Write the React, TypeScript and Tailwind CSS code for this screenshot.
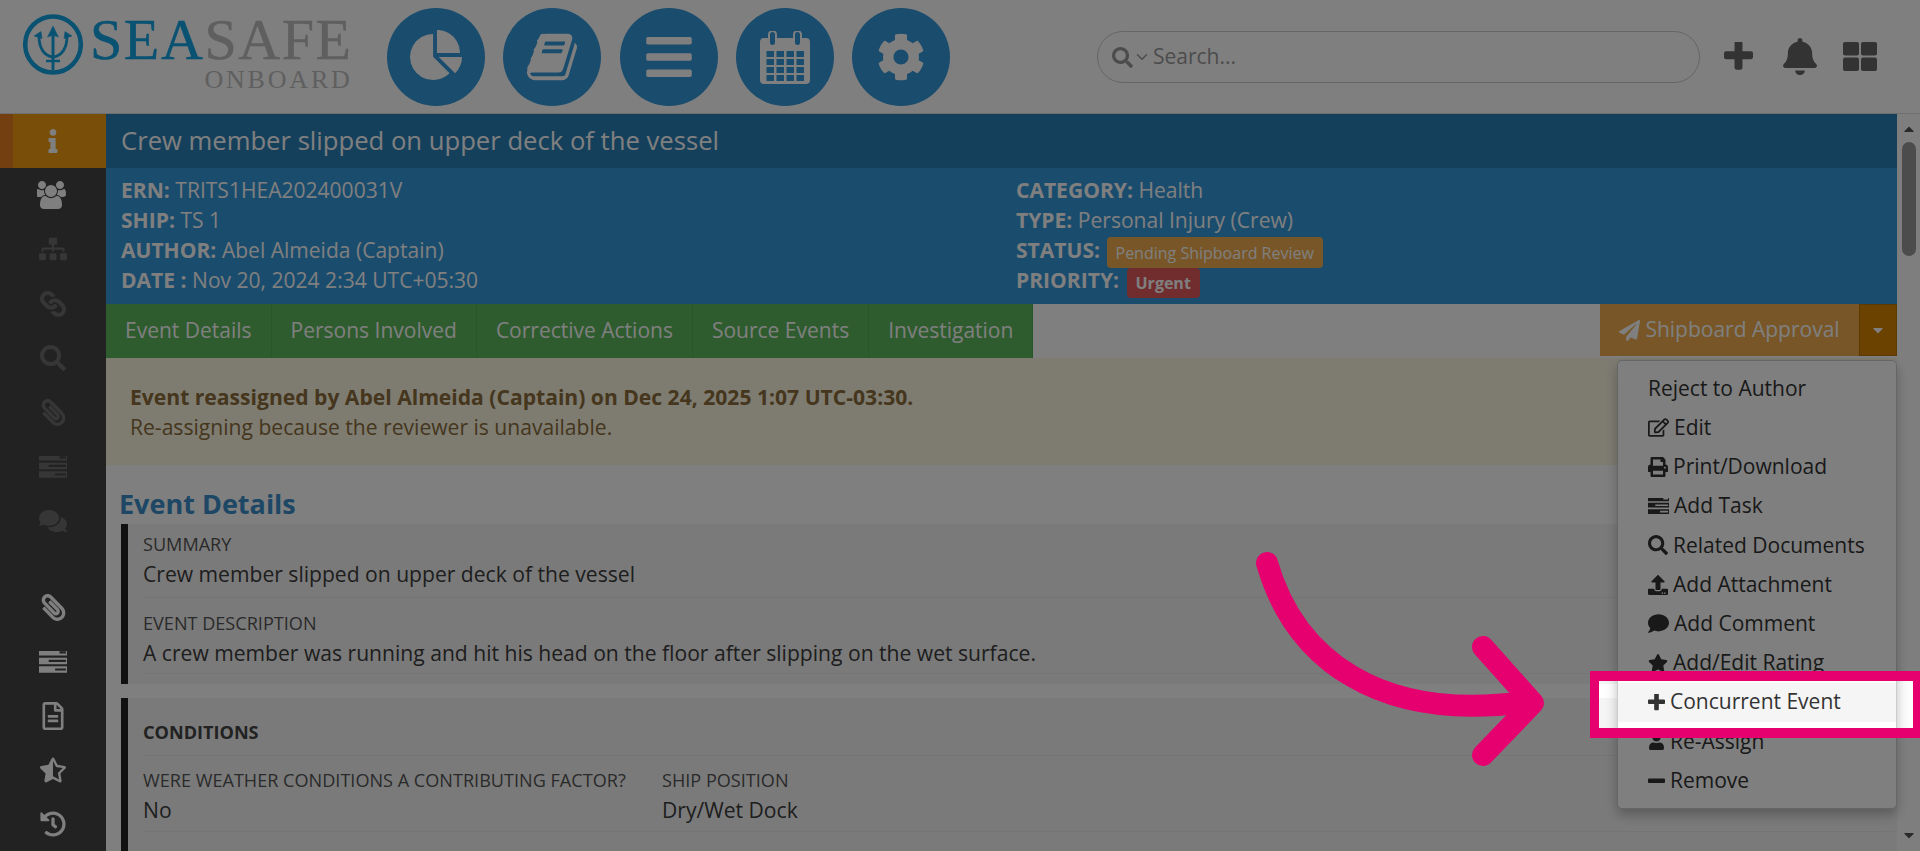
import type { ReactNode } from 'react';
import { ChevronDown } from 'lucide-react';
import {
  FaBars,
  FaBell,
  FaCaretDown,
  FaCog,
  FaComment,
  FaComments,
  FaHistory,
  FaInfo,
  FaLink,
  FaPaperclip,
  FaPaperPlane,
  FaPrint,
  FaRegEdit,
  FaRegFileAlt,
  FaSearch,
  FaSitemap,
  FaStar,
  FaStarHalfAlt,
  FaUpload,
  FaUser,
} from 'react-icons/fa';

type IconProps = { className?: string };

function UsersIcon({ className }: IconProps) {
  return (
    <svg viewBox="0 0 2048 1792" fill="currentColor" className={className}>
      <path d="M529 896q-162 5-265 128h-134q-82 0-138-40.5t-56-118.5q0-353 124-353 6 0 43.5 21t97.5 42.5 119 21.5q67 0 133-23-5 37-5 66 0 139 81 256zm1071 637q0 120-73 189.5t-194 69.5h-874q-121 0-194-69.5t-73-189.5q0-53 3.5-103.5t14-109 26.5-108.5 43-97.5 62-81 85.5-53.5 111.5-20q10 0 43 21.5t73 48 107 48 135 21.5 135-21.5 107-48 73-48 43-21.5q61 0 111.5 20t85.5 53.5 62 81 43 97.5 26.5 108.5 14 109 3.5 103.5zm-1024-1277q0 106-75 181t-181 75-181-75-75-181 75-181 181-75 181 75 75 181zm704 384q0 159-112.5 271.5t-271.5 112.5-271.5-112.5-112.5-271.5 112.5-271.5 271.5-112.5 271.5 112.5 112.5 271.5zm576 225q0 78-56 118.5t-138 40.5h-134q-103-123-265-128 81-117 81-256 0-29-5-66 66 23 133 23 59 0 119-21.5t97.5-42.5 43.5-21q124 0 124 353zm-128-609q0 106-75 181t-181 75-181-75-75-181 75-181 181-75 181 75 75 181z" />
    </svg>
  );
}

function TasksIcon({ className }: IconProps) {
  return (
    <svg viewBox="64 256 1664 1280" fill="currentColor" className={className}>
      <path d="M1024 1408h640v-128h-640v128zm-384-512h1024v-128h-1024v128zm640-512h384v-128h-384v128zm512 832v256q0 26-19 45t-45 19h-1664q-26 0-45-19t-19-45v-256q0-26 19-45t45-19h1664q26 0 45 19t19 45zm0-512v256q0 26-19 45t-45 19h-1664q-26 0-45-19t-19-45v-256q0-26 19-45t45-19h1664q26 0 45 19t19 45zm0-512v256q0 26-19 45t-45 19h-1664q-26 0-45-19t-19-45v-256q0-26 19-45t45-19h1664q26 0 45 19t19 45z" />
    </svg>
  );
}

function PlusIcon({ className }: IconProps) {
  return (
    <svg viewBox="192 192 1408 1408" fill="currentColor" className={className}>
      <path d="M1600 736v192q0 40-28 68t-68 28h-416v416q0 40-28 68t-68 28h-192q-40 0-68-28t-28-68v-416h-416q-40 0-68-28t-28-68v-192q0-40 28-68t68-28h416v-416q0-40 28-68t68-28h192q40 0 68 28t28 68v416h416q40 0 68 28t28 68z" />
    </svg>
  );
}

function MinusIcon({ className }: IconProps) {
  return (
    <svg viewBox="0 0 18 18" fill="currentColor" className={className}>
      <rect x="0" y="7" width="18" height="4.6" rx="1" />
    </svg>
  );
}

function PieIcon({ className }: IconProps) {
  return (
    <svg viewBox="0 0 1728 1792" fill="currentColor" className={className}>
      <path d="M768 890l546 546q-106 108-247.5 168t-298.5 60q-209 0-385.5-103t-279.5-279.5-103-385.5 103-385.5 279.5-279.5 385.5-103v762zm187 2h773q0 157-60 298.5t-168 247.5zm709-128h-768v-768q209 0 385.5 103t279.5 279.5 103 385.5z" />
    </svg>
  );
}

function BookIcon({ className }: IconProps) {
  return (
    <svg viewBox="0 0 1792 1792" fill="currentColor" className={className}>
      <path d="M1703 478q40 57 18 129l-275 906q-19 64-76.5 107.5t-122.5 43.5h-923q-77 0-148.5-53.5t-99.5-131.5q-24-67-2-127 0-4 3-27t4-37q1-8-3-21.5t-3-19.5q2-11 8-21t16.5-23.5 16.5-23.5q23-38 45-91.5t30-91.5q3-10 .5-30t-.5-28q3-11 17-28t17-23q21-36 42-92t25-90q1-9-2.5-32t.5-28q4-13 22-30.5t22-22.5q19-26 42.5-84.5t27.5-96.5q1-8-3-25.5t-2-26.5q2-8 9-18t18-23 17-21q8-12 16.5-30.5t15-35 16-36 19.5-32 26.5-23.5 36-11.5 47.5 5.5l-1 3q38-9 51-9h761q74 0 114 56t18 130l-274 906q-36 119-71.5 153.5t-128.5 34.5h-869q-27 0-38 15-11 16-1 43 24 70 144 70h923q29 0 56-15.5t35-41.5l300-987q7-22 5-57 38 15 59 43zm-1064 2q-4 13 2 22.5t20 9.5h608q13 0 25.5-9.5t16.5-22.5l21-64q4-13-2-22.5t-20-9.5h-608q-13 0-25.5 9.5t-16.5 22.5zm-83 256q-4 13 2 22.5t20 9.5h608q13 0 25.5-9.5t16.5-22.5l21-64q4-13-2-22.5t-20-9.5h-608q-13 0-25.5 9.5t-16.5 22.5z" />
    </svg>
  );
}

const calCols = [6.5, 16.5, 26.5, 36.5];
const calRows = [20, 28, 36, 44];

function CalendarIcon({ className }: IconProps) {
  return (
    <svg viewBox="0 0 50 53" className={className}>
      <rect x="0" y="7" width="50" height="46" rx="4" fill="currentColor" />
      <rect x="9" y="0" width="7" height="15" rx="3.5" fill="#3498db" stroke="currentColor" strokeWidth="2" />
      <rect x="34" y="0" width="7" height="15" rx="3.5" fill="#3498db" stroke="currentColor" strokeWidth="2" />
      {calRows.map((y) =>
        calCols.map((x) => <rect key={`${x}-${y}`} x={x} y={y} width="7.5" height="6" fill="#3498db" />),
      )}
    </svg>
  );
}

function GridIcon({ className }: IconProps) {
  return (
    <svg viewBox="0 0 34 29" fill="currentColor" className={className}>
      <rect x="0" y="0" width="16" height="13.5" rx="2" />
      <rect x="18" y="0" width="16" height="13.5" rx="2" />
      <rect x="0" y="15.5" width="16" height="13.5" rx="2" />
      <rect x="18" y="15.5" width="16" height="13.5" rx="2" />
    </svg>
  );
}

function Logo() {
  return (
    <div className="flex items-start pl-[23px] pt-[14px]">
      <svg viewBox="0 0 60 62" className="h-[62px] w-[60px] text-[#14a4e4]" fill="none" stroke="currentColor">
        <ellipse cx="30" cy="30.5" rx="27.8" ry="28" strokeWidth="4.5" />
        <path d="M30 20v36" strokeWidth="3" />
        <path d="M30 12l-5.500 11q5.500-3 11 0z" fill="currentColor" strokeWidth="0.5" />
        <path d="M16 22c0 12 5 20 14 21 9-1 14-9 14-21" strokeWidth="2.800" />
        <path d="M11 22l7-4.500 1 7zM49 22l-7-4.500-1 7z" fill="currentColor" strokeWidth="0.5" />
        <path d="M23 47h14" strokeWidth="2.500" />
      </svg>
      <div className="ml-[7px] flex flex-col items-end pt-[1px] font-['Liberation_Serif',serif]">
        <div className="text-[58px] leading-[50px] tracking-[1.6px] [-webkit-text-stroke:0.5px]">
          <span className="text-[#14a4e4]">SEA</span>
          <span className="text-[#bebebe]">SAFE</span>
        </div>
        <div className="mt-[3px] text-[26px] leading-[24px] tracking-[2.8px] text-[#bebebe]">ONBOARD</div>
      </div>
    </div>
  );
}

function Header() {
  const circle = 'flex size-[98px] items-center justify-center rounded-full bg-[#3498db] text-white';
  return (
    <header className="flex h-[114px] items-start border-b border-[#ddd] bg-white">
      <div className="w-[387px]">
        <Logo />
      </div>
      <nav className="flex gap-[18.3px] pt-[8px]">
        <div className={circle}>
          <PieIcon className="h-[54px] w-[52px]" />
        </div>
        <div className={circle}>
          <BookIcon className="size-[54px]" />
        </div>
        <div className={circle}>
          <FaBars className="size-[52px]" />
        </div>
        <div className={circle}>
          <CalendarIcon className="h-[53px] w-[50px]" />
        </div>
        <div className={circle}>
          <FaCog className="size-[48px]" />
        </div>
      </nav>
      <div className="ml-[146.800px] mt-[31px] flex h-[52px] w-[603px] items-center rounded-full border border-[#ccc] pl-[14px]">
        <FaSearch className="size-[21px] text-[#999]" />
        <ChevronDown className="size-[18px] text-[#999]" strokeWidth={2} />
        <span className="ml-[2px] text-[21px] text-[#999]">Search...</span>
      </div>
      <div className="mt-[38px] flex items-center text-[#666]">
        <PlusIcon className="ml-[24px] size-[29px]" />
        <FaBell className="ml-[30px] h-[37px] w-[34px]" preserveAspectRatio="none" />
        <GridIcon className="ml-[26px] h-[29px] w-[34px]" />
      </div>
    </header>
  );
}

function SideItem({ icon, active, muted }: { icon: ReactNode; active?: boolean; muted?: boolean }) {
  return (
    <div
      className={
        active
          ? 'flex h-[54px] items-center justify-center border-l-[13px] border-[#e67e22] bg-[#f39c12] pr-[13px] text-white'
          : muted
            ? 'flex h-[54.3px] items-center justify-center text-[#6c6c6c]'
            : 'flex h-[54.3px] items-center justify-center text-white'
      }
    >
      {icon}
    </div>
  );
}

function Sidebar() {
  return (
    <aside className="w-[106px] shrink-0 bg-[#444]">
      <SideItem active icon={<FaInfo className="size-[24px]" />} />
      <SideItem icon={<UsersIcon className="h-[28px] w-[32px]" />} />
      <SideItem muted icon={<FaSitemap className="size-[28px]" />} />
      <SideItem muted icon={<FaLink className="size-[26px] rotate-90" />} />
      <SideItem muted icon={<FaSearch className="size-[26px]" />} />
      <SideItem muted icon={<FaPaperclip className="size-[27px] -scale-x-100" />} />
      <SideItem muted icon={<TasksIcon className="h-[22px] w-[28px]" />} />
      <SideItem muted icon={<FaComments className="size-[28px]" />} />
      <div className="h-[32px]" />
      <SideItem icon={<FaPaperclip className="size-[27px] -scale-x-100" />} />
      <SideItem icon={<TasksIcon className="h-[22px] w-[28px]" />} />
      <SideItem icon={<FaRegFileAlt className="size-[28px]" />} />
      <SideItem icon={<FaStarHalfAlt className="size-[26px]" />} />
      <SideItem icon={<FaHistory className="size-[26px]" />} />
    </aside>
  );
}

const tabs = ['Event Details', 'Persons Involved', 'Corrective Actions', 'Source Events', 'Investigation'];

function InfoLine({ label, children }: { label: string; children: ReactNode }) {
  return (
    <div className="flex h-[30px] items-center gap-[5.5px] whitespace-nowrap text-[21.050px] text-white">
      <strong className="font-bold">{label}</strong>
      {children}
    </div>
  );
}

function Field({ label, value, className }: { label: string; value: string; className?: string }) {
  return (
    <div className={className}>
      <div className="h-[24px] text-[18.100px] leading-[24px] text-[#555]">{label}</div>
      <div className="mt-[3px] h-[30px] text-[21.100px] leading-[30px] text-[#3c3c3c]">{value}</div>
    </div>
  );
}

function Main() {
  return (
    <main className="min-w-0 flex-1 overflow-hidden">
      <div className="flex h-[54px] items-center bg-[#2980b9] pl-[15px] text-[25.650px] text-white">
        Crew member slipped on upper deck of the vessel
      </div>
      <div className="grid h-[136px] grid-cols-[895px_1fr] bg-[#3498db] px-[15px] py-[8px]">
        <div>
          <InfoLine label="ERN:">TRITS1HEA202400031V</InfoLine>
          <InfoLine label="SHIP:">TS 1</InfoLine>
          <InfoLine label="AUTHOR:">Abel Almeida (Captain)</InfoLine>
          <InfoLine label="DATE :">Nov 20, 2024 2:34 UTC+05:30</InfoLine>
        </div>
        <div>
          <InfoLine label="CATEGORY:">Health</InfoLine>
          <InfoLine label="TYPE:">Personal Injury (Crew)</InfoLine>
          <InfoLine label="STATUS:">
            <span className="ml-[1px] mt-[3px] flex h-[31px] items-center rounded-[4px] bg-[#f0ad4e] px-[9px] text-[16px]">
              Pending Shipboard Review
            </span>
          </InfoLine>
          <InfoLine label="PRIORITY:">
            <span className="ml-[2px] mt-[3px] flex h-[30px] items-center rounded-[4px] bg-[#e25a5a] px-[9px] text-[16px] font-bold">
              Urgent
            </span>
          </InfoLine>
        </div>
      </div>
      <div className="flex h-[54px] items-start justify-between">
        <div className="flex h-[54px]">
          {tabs.map((t) => (
            <div
              key={t}
              className="flex items-center border-r border-[#4cae4c] bg-[#5cb85c] px-[19px] text-[21px] text-white"
            >
              {t}
            </div>
          ))}
        </div>
        <div className="flex h-[52px]">
          <div className="flex w-[259px] items-center justify-center gap-[5px] bg-[#f0ad4e] text-[21px] text-white">
            <FaPaperPlane className="size-[21px]" />
            Shipboard Approval
          </div>
          <div className="flex w-[38px] items-center justify-center border border-[#b87400] bg-[#d68400] text-white">
            <FaCaretDown className="size-[16px]" />
          </div>
        </div>
      </div>
      <div className="h-[107px] bg-[#fcf8e3] pl-[24px] pt-[24px] text-[21.100px] leading-[30px] text-[#8a6d3b]">
        <strong className="font-bold">Event reassigned by Abel Almeida (Captain) on Dec 24, 2025 1:07 UTC-03:30.</strong>
        <div>Re-assigning because the reviewer is unavailable.</div>
      </div>
      <div className="pl-[14px]">
        <h2 className="-ml-[1px] flex h-[59px] items-end pb-[2px] text-[27px] font-bold leading-[36px] text-[#3a8fc9]">Event Details</h2>
        <section className="ml-[1px] h-[160px] border-l-[7px] border-[#222] bg-[#f5f5f5] pl-[15px]">
          <Field label="SUMMARY" value="Crew member slipped on upper deck of the vessel" className="h-[74px] border-b border-[#e8e8e8] pt-[8px]" />
          <Field label="EVENT DESCRIPTION" value="A crew member was running and hit his head on the floor after slipping on the wet surface." className="h-[76px] border-b border-[#e8e8e8] pt-[13px]" />
        </section>
        <section className="ml-[1px] mt-[14px] border-l-[7px] border-[#222] bg-[#f5f5f5] pl-[15px]">
          <div className="flex h-[58px] items-end border-b border-[#e8e8e8] pb-[11px] text-[18.100px] font-bold leading-[24px] text-[#444]">
            CONDITIONS
          </div>
          <div className="grid grid-cols-[519px_1fr] border-b border-[#e8e8e8] pb-[6px] pt-[12px]">
            <Field label="WERE WEATHER CONDITIONS A CONTRIBUTING FACTOR?" value="No" />
            <Field label="SHIP POSITION" value="Dry/Wet Dock" />
          </div>
          <div className="h-[40px]" />
        </section>
      </div>
    </main>
  );
}

function Scrollbar() {
  return (
    <div className="flex w-[23px] shrink-0 flex-col items-center justify-between bg-[#fdfdfd] py-[8px] text-[#555]">
      <div className="flex w-full flex-col items-center">
        <FaCaretDown className="size-[16px] rotate-180" />
        <div className="mt-[4px] h-[114px] w-[14px] rounded-full bg-[#999]" />
      </div>
      <FaCaretDown className="size-[16px]" />
    </div>
  );
}

const menuItems = [
  { label: 'Reject to Author' },
  { label: 'Edit', icon: <FaRegEdit className="size-[21px]" /> },
  { label: 'Print/Download', icon: <FaPrint className="size-[20px]" /> },
  { label: 'Add Task', icon: <TasksIcon className="h-[16px] w-[21px]" /> },
  { label: 'Related Documents', icon: <FaSearch className="size-[20px]" /> },
  { label: 'Add Attachment', icon: <FaUpload className="size-[20px]" /> },
  { label: 'Add Comment', icon: <FaComment className="size-[21px]" /> },
  { label: 'Add/Edit Rating', icon: <FaStar className="size-[20px]" /> },
  { label: 'Concurrent Event', icon: <PlusIcon className="size-[17px]" />, active: true },
  { label: 'Re-Assign', icon: <FaUser className="size-[17px]" /> },
  { label: 'Remove', icon: <MinusIcon className="size-[17px]" /> },
];

function ActionMenu() {
  return (
    <div className="absolute left-[1617px] top-[360px] w-[280px] rounded-[5px] border border-[#ccc] bg-white py-[8px] text-[21px] text-[#333] shadow-[0_6px_12px_rgba(0,0,0,0.25)]">
      {menuItems.map((m) => (
        <div
          key={m.label}
          className={
            m.active
              ? 'flex h-[39.2px] items-center gap-[5px] bg-[#f5f5f5] pl-[30px]'
              : 'flex h-[39.2px] items-center gap-[5px] pl-[30px]'
          }
        >
          {m.icon}
          {m.label}
        </div>
      ))}
    </div>
  );
}

export default function App() {
  return (
    <div className="relative h-[851px] overflow-hidden bg-white font-['Open_Sans','Liberation_Sans',sans-serif]">
      <Header />
      <div className="flex h-[737px]">
        <Sidebar />
        <Main />
        <Scrollbar />
      </div>
      <ActionMenu />
      {/* dim layer with the cut-out round the highlighted item */}
      <div className="absolute left-[1599px] top-[681px] h-[47px] w-[314px] shadow-[0_0_0_3000px_rgba(0,0,0,0.5)]" />
      <div className="absolute left-[1590px] top-[671px] h-[67px] w-[330px] border-y-[10px] border-l-[9px] border-r-[7px] border-[#e6006f]" />
      <svg className="absolute left-[1240px] top-[540px] h-[240px] w-[330px]" viewBox="1240 540 330 240" fill="none" stroke="#e6006f" strokeLinecap="round" strokeLinejoin="round">
        <path d="M1267 563C1295 660 1380 722 1525 702" strokeWidth="22" />
        <path d="M1483 647L1533 703L1483 755" strokeWidth="22" />
      </svg>
    </div>
  );
}
